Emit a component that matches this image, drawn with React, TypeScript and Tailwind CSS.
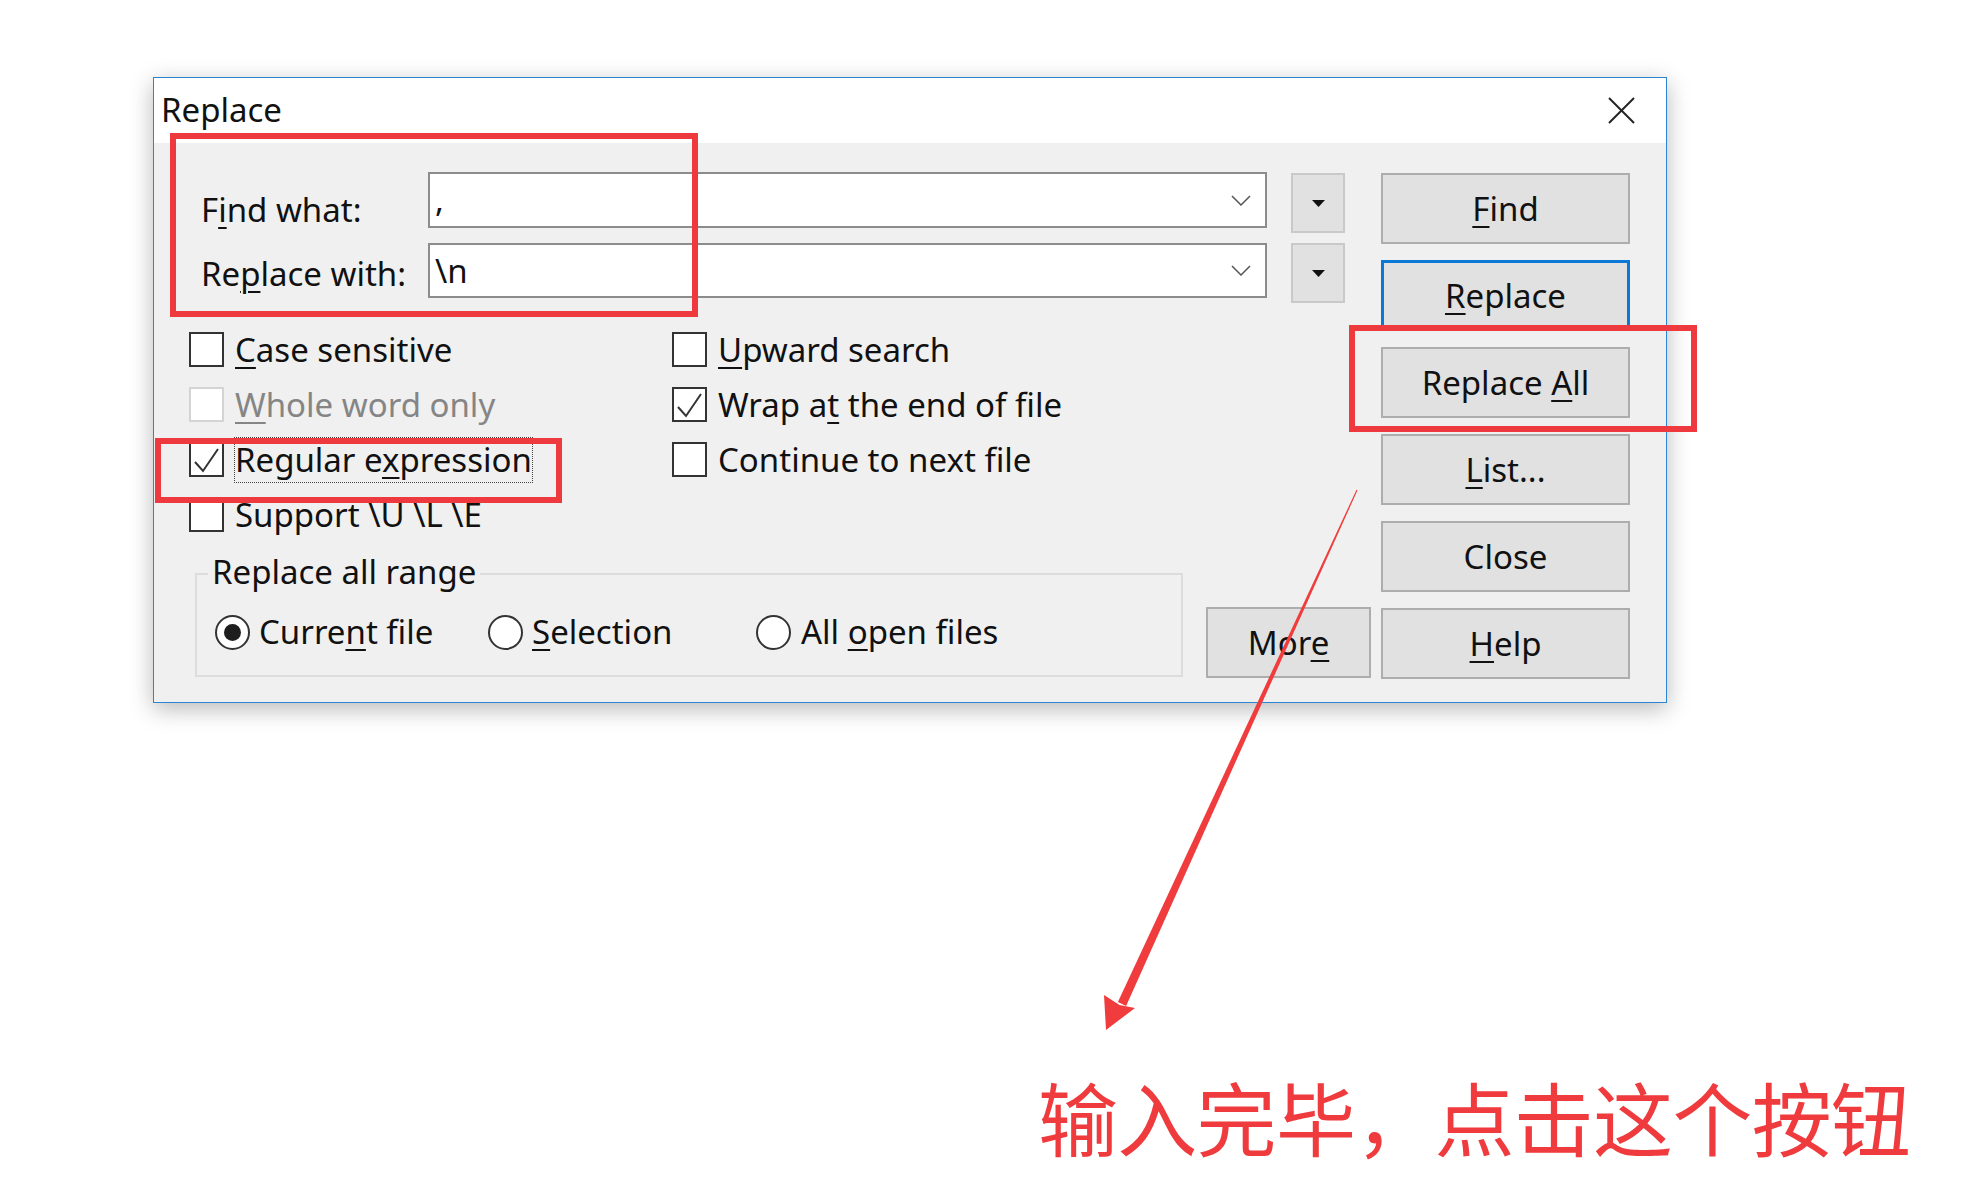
import React from 'react';

const ui = "font-['Noto_Sans',sans-serif] text-[33px] leading-[44px] text-[#111]";

function U({ children }: { children: React.ReactNode }) {
  return <span className="underline decoration-[2px] underline-offset-[5px]">{children}</span>;
}

function Check({ on, disabled }: { on?: boolean; disabled?: boolean }) {
  return (
    <div
      className={
        disabled
          ? 'h-[35px] w-[35px] shrink-0 border-2 border-[#d4d4d4] bg-white'
          : 'h-[35px] w-[35px] shrink-0 border-2 border-[#333] bg-white'
      }
    >
      {on && (
        <svg width="31" height="31" viewBox="0 0 31 31">
          <polyline points="4,18 12,27 27,5" fill="none" stroke="#333" strokeWidth="2" />
        </svg>
      )}
    </div>
  );
}

function CheckRow({ on, disabled, children }: { on?: boolean; disabled?: boolean; children: React.ReactNode }) {
  return (
    <div className="flex h-[55px] items-center">
      <Check on={on} disabled={disabled} />
      <span className={disabled ? 'ml-[11px] text-[#858585]' : 'ml-[11px]'}>{children}</span>
    </div>
  );
}

function Radio({ on }: { on?: boolean }) {
  return (
    <div className="flex h-[35px] w-[35px] shrink-0 items-center justify-center rounded-full border-2 border-[#333] bg-white">
      {on && <div className="h-[17px] w-[17px] rounded-full bg-[#1e1e1e]" />}
    </div>
  );
}

function Combo({ value, h }: { value: string; h: string }) {
  return (
    <div className={`flex w-[839px] items-center border-2 border-[#8c8c8c] bg-white pl-[5px] pr-[14px] ${h}`}>
      <span className="flex-1">{value}</span>
      <svg width="20" height="11" viewBox="0 0 20 11">
        <polyline points="1,1 10,10 19,1" fill="none" stroke="#555" strokeWidth="1.5" />
      </svg>
    </div>
  );
}

function DropBtn({ mt }: { mt: string }) {
  return (
    <div className={`ml-[24px] flex h-[60px] w-[54px] items-center justify-center border-2 border-[#c9c9c9] bg-[#e1e1e1] ${mt}`}>
      <svg width="13" height="7" viewBox="0 0 13 7">
        <polygon points="0,0 13,0 6.5,7" fill="#111" />
      </svg>
    </div>
  );
}

function Btn({ children, className }: { children: React.ReactNode; className: string }) {
  return (
    <div className={`flex h-[71px] items-center justify-center bg-[#e1e1e1] ${className}`}>
      <span>{children}</span>
    </div>
  );
}

export default function App() {
  return (
    <div className={`relative h-[1202px] w-[1982px] overflow-hidden bg-white ${ui}`}>
      <div className="pl-[153px] pt-[77px]">
        {/* dialog */}
        <div className="flex h-[626px] w-[1514px] flex-col border border-[#2a86d3] bg-white shadow-[0_6px_22px_rgba(0,0,0,0.28)]">
          <div className="flex h-[65px] shrink-0 items-start justify-between pl-[7px] pt-[10px]">
            <span>Replace</span>
            <svg className="mr-[31px] mt-[9px]" width="27" height="27" viewBox="0 0 27 27">
              <line x1="1" y1="1" x2="26" y2="26" stroke="#222" strokeWidth="2" />
              <line x1="26" y1="1" x2="1" y2="26" stroke="#222" strokeWidth="2" />
            </svg>
          </div>

          <div className="flex flex-1 bg-[#f0f0f0]">
            {/* left part */}
            <div className="w-[1227px] pt-[29px]">
              <div className="flex items-start">
                <div className="ml-[47px] w-[227px] pt-[16px]">
                  F<U>i</U>nd what:
                </div>
                <Combo value="," h="h-[56px]" />
                <DropBtn mt="mt-[1px]" />
              </div>
              <div className="mt-[10px] flex items-start">
                <div className="ml-[47px] w-[227px] pt-[9px]">
                  Re<U>p</U>lace with:
                </div>
                <Combo value="\n" h="h-[55px]" />
                <DropBtn mt="mt-0" />
              </div>

              <div className="ml-[35px] mt-[19px] flex">
                <div className="w-[483px]">
                  <CheckRow>
                    <U>C</U>ase sensitive
                  </CheckRow>
                  <CheckRow disabled>
                    <U>W</U>hole word only
                  </CheckRow>
                  <div className="flex h-[55px] items-center">
                    <Check on />
                    <span className="ml-[10px] border border-dotted border-[#444]">
                      Regular e<U>x</U>pression
                    </span>
                  </div>
                  <CheckRow>Support \U \L \E</CheckRow>
                </div>
                <div>
                  <CheckRow>
                    <U>U</U>pward search
                  </CheckRow>
                  <CheckRow on>
                    Wrap a<U>t</U> the end of file
                  </CheckRow>
                  <CheckRow>Continue to next file</CheckRow>
                </div>
              </div>

              <div className="mt-[31px] flex items-start">
                <div className="relative ml-[41px] h-[104px] w-[988px] border-2 border-[#dcdcdc]">
                  <span className="absolute left-[11px] top-[-25px] bg-[#f0f0f0] px-[4px]">Replace all range</span>
                  <div className="mt-[35px] flex h-[44px] items-center pl-[18px]">
                    <div className="flex w-[273px] items-center">
                      <Radio on />
                      <span className="ml-[9px]">
                        Curre<U>n</U>t file
                      </span>
                    </div>
                    <div className="flex w-[268px] items-center">
                      <Radio />
                      <span className="ml-[9px]">
                        <U>S</U>election
                      </span>
                    </div>
                    <div className="flex items-center">
                      <Radio />
                      <span className="ml-[10px]">
                        All <U>o</U>pen files
                      </span>
                    </div>
                  </div>
                </div>
                <Btn className="ml-[23px] mt-[34px] w-[165px] border-2 border-[#adadad]">
                  Mor<U>e</U>
                </Btn>
              </div>
            </div>

            {/* right buttons */}
            <div className="flex w-[249px] flex-col gap-[16px] pt-[30px]">
              <Btn className="border-2 border-[#adadad]">
                <U>F</U>ind
              </Btn>
              <Btn className="border-[3px] border-[#0a78d4]">
                <U>R</U>eplace
              </Btn>
              <Btn className="border-2 border-[#adadad]">
                Replace <U>A</U>ll
              </Btn>
              <Btn className="border-2 border-[#adadad]">
                <U>L</U>ist...
              </Btn>
              <Btn className="border-2 border-[#adadad]">Close</Btn>
              <Btn className="border-2 border-[#adadad]">
                <U>H</U>elp
              </Btn>
            </div>
          </div>
        </div>
      </div>

      {/* annotation caption */}
      <div className="mt-[372px] pl-[1038px] font-['Noto_Sans_CJK_SC',sans-serif] text-[80px] font-normal leading-[80px] tracking-[-0.7px] text-[#ef3b3d]">
        输入完毕，点击这个按钮
      </div>

      {/* red highlight boxes */}
      <div className="absolute left-[170px] top-[133px] h-[184px] w-[528px] border-[6px] border-[#ee3a3f]" />
      <div className="absolute left-[1349px] top-[325px] h-[107px] w-[348px] border-[6px] border-[#ee3a3f]" />
      <div className="absolute left-[155px] top-[438px] h-[65px] w-[407px] border-[6px] border-[#ee3a3f]" />

      {/* arrow */}
      <svg className="absolute left-0 top-0" width="1982" height="1202" viewBox="0 0 1982 1202">
        <polygon points="1357.5,490.2 1126.1,1005.9 1117.9,1002.1 1356.5,489.8" fill="#f03c3c" />
        <polygon points="1106,1030 1135,1008 1119.5,1005 1104,995" fill="#f03c3c" />
      </svg>
    </div>
  );
}
